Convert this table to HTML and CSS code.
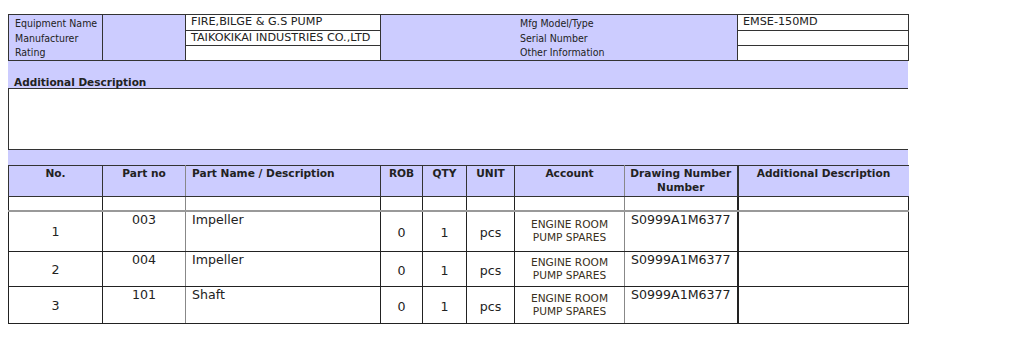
FILE: index.html
```html
<!DOCTYPE html>
<html>
<head>
<meta charset="utf-8">
<title>Spare Parts</title>
<link rel="stylesheet" href="styles.css">
</head>
<body>
<div class="sheet">
  <table class="info">
    <colgroup>
      <col class="w94"><col class="w83"><col class="w195"><col class="w357"><col class="w171">
    </colgroup>
    <tr class="r1">
      <td class="lab" rowspan="3">Equipment Name<br>Manufacturer<br>Rating</td>
      <td class="lav" rowspan="3"></td>
      <td class="val">FIRE,BILGE &amp; G.S PUMP</td>
      <td class="lab mid" rowspan="3">Mfg Model/Type<br>Serial Number<br>Other Information</td>
      <td class="val">EMSE-150MD</td>
    </tr>
    <tr class="r2">
      <td class="val">TAIKOKIKAI INDUSTRIES CO.,LTD</td>
      <td class="val"></td>
    </tr>
    <tr class="r3">
      <td class="val"></td>
      <td class="val"></td>
    </tr>
  </table>

  <div class="band-title">Additional Description</div>
  <div class="desc-box"></div>
  <div class="band"></div>

  <table class="parts">
    <colgroup>
      <col class="w94"><col class="w83"><col class="w195"><col class="w42"><col class="w44"><col class="w48"><col class="w110"><col class="w113"><col class="w171">
    </colgroup>
    <tr class="head">
      <th>No.</th>
      <th class="soft">Part no</th>
      <th class="left">Part Name / Description</th>
      <th>ROB</th>
      <th>QTY</th>
      <th>UNIT</th>
      <th class="soft">Account</th>
      <th class="thick">Drawing Number<br>Number</th>
      <th class="last">Additional Description</th>
    </tr>
    <tr class="empty">
      <td></td><td class="soft"></td><td></td><td></td><td></td><td></td><td class="soft"></td><td class="thick"></td><td></td>
    </tr>
    <tr class="row first">
      <td class="num">1</td>
      <td class="pno soft">003</td>
      <td class="pname">Impeller</td>
      <td class="qty">0</td>
      <td class="qty">1</td>
      <td class="qty">pcs</td>
      <td class="acct soft">ENGINE ROOM<br>PUMP SPARES</td>
      <td class="dwg thick">S0999A1M6377</td>
      <td></td>
    </tr>
    <tr class="row second">
      <td class="num">2</td>
      <td class="pno soft">004</td>
      <td class="pname">Impeller</td>
      <td class="qty">0</td>
      <td class="qty">1</td>
      <td class="qty">pcs</td>
      <td class="acct soft">ENGINE ROOM<br>PUMP SPARES</td>
      <td class="dwg thick">S0999A1M6377</td>
      <td></td>
    </tr>
    <tr class="row third">
      <td class="num">3</td>
      <td class="pno soft">101</td>
      <td class="pname">Shaft</td>
      <td class="qty">0</td>
      <td class="qty">1</td>
      <td class="qty">pcs</td>
      <td class="acct soft">ENGINE ROOM<br>PUMP SPARES</td>
      <td class="dwg thick">S0999A1M6377</td>
      <td></td>
    </tr>
  </table>
</div>
</body>
</html>
```

FILE: styles.css
```css
html, body {
  margin: 0;
  padding: 0;
  background: #ffffff;
}

body {
  font-family: "DejaVu Sans Condensed", "DejaVu Sans", Verdana, sans-serif;
  color: #222222;
}

.sheet {
  padding: 14px 8px 0 8px;
  width: 900px;
}

table {
  border-collapse: collapse;
  table-layout: fixed;
  width: 900px;
}

.w94 { width: 94px; }
.w83 { width: 83px; }
.w195 { width: 195px; }
.w357 { width: 357px; }
.w171 { width: 171px; }
.w42 { width: 42px; }
.w44 { width: 44px; }
.w48 { width: 48px; }
.w110 { width: 110px; }
.w113 { width: 113px; }

/* ---------- info table ---------- */
.info td {
  border: 1px solid #333333;
  padding: 0;
  font-size: 10.5px;
  line-height: 15px;
  vertical-align: top;
}

.info .r1 { height: 15px; }
.info .r2 { height: 14px; }
.info .r3 { height: 14px; }

.info .lab {
  background: #ccccff;
  padding: 1px 0 0 6px;
  line-height: 14.67px;
}

.info .lab.mid {
  padding-left: 139px;
}

.info .lav {
  background: #ccccff;
}

.info .val {
  padding: 0 0 0 5px;
  background: #ffffff;
  white-space: nowrap;
  font-family: "DejaVu Sans", Verdana, sans-serif;
  font-size: 11.2px;
  line-height: 14px;
}

/* ---------- description block ---------- */
.band-title {
  background: #ccccff;
  height: 13px;
  padding: 14px 0 0 6px;
  font-family: "DejaVu Sans", Verdana, sans-serif;
  font-size: 10.5px;
  line-height: 14px;
  font-weight: bold;
  border-bottom: 1px solid #333333;
}

.desc-box {
  height: 60px;
  border-left: 1px solid #333333;
  border-bottom: 1px solid #333333;
}

.band {
  height: 15px;
  background: #ccccff;
}

/* ---------- parts table ---------- */
.parts th {
  background: #ccccff;
  border: 1px solid #333333;
  font-family: "DejaVu Sans", Verdana, sans-serif;
  font-size: 10.6px;
  line-height: 14px;
  font-weight: bold;
  text-align: center;
  vertical-align: top;
  padding: 0;
}

.parts .head { height: 31px; }

.parts th.left {
  text-align: left;
  padding-left: 6px;
}

.parts th.last {
  border-right: none;
}

.parts td {
  border: 1px solid #222222;
  padding: 0;
  font-family: "DejaVu Sans", Verdana, sans-serif;
  font-size: 12.6px;
  line-height: 15px;
  vertical-align: middle;
  text-align: center;
}

.parts .soft {
  border-right-color: #888888;
}

.parts .thick {
  border-right-width: 2px;
}

.parts .empty { height: 14px; }
.parts .empty td { border-bottom: 2px solid #999999; }

.parts .first { height: 41px; }
.parts .second { height: 35px; }
.parts .third { height: 37px; }

.parts .pno {
  vertical-align: top;
}

.parts .pname {
  vertical-align: top;
  text-align: left;
  padding-left: 6px;
}

.parts .dwg {
  vertical-align: top;
  text-align: left;
  padding-left: 6px;
}

.parts .qty {
  padding-top: 2px;
}

.parts .acct {
  font-family: "DejaVu Sans", Verdana, sans-serif;
  font-size: 10.6px;
  line-height: 13px;
  color: #3a3020;
}
```
